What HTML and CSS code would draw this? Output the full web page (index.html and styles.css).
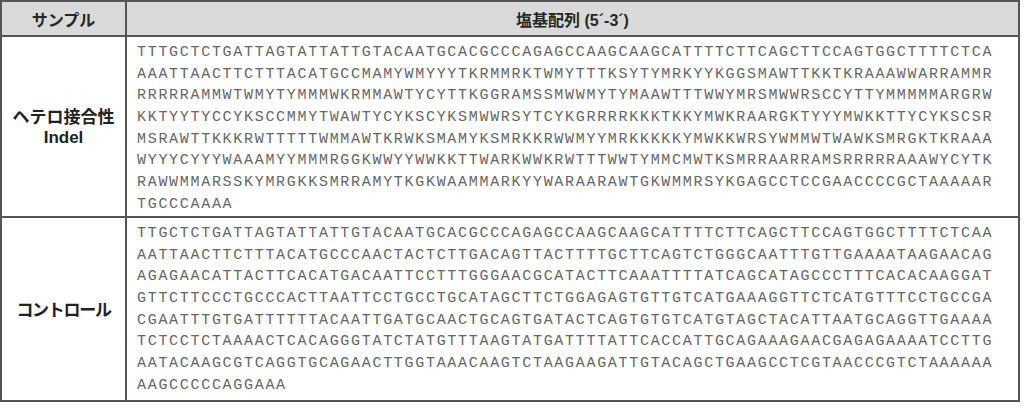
FILE: index.html
```html
<!DOCTYPE html>
<html lang="ja">
<head>
<meta charset="utf-8">
<title>塩基配列</title>
<link rel="stylesheet" href="styles.css">
</head>
<body>
<div class="sheet">
  <div class="cell head label-col">サンプル</div>
  <div class="cell head seq-col">塩基配列 (5´-3´)</div>

  <div class="cell label label-col row-a"><span>ヘテロ接合性</span><span class="latin">Indel</span></div>
  <div class="cell seq seq-col row-a">
    <div>TTTGCTCTGATTAGTATTATTGTACAATGCACGCCCAGAGCCAAGCAAGCATTTTCTTCAGCTTCCAGTGGCTTTTCTCA</div>
    <div>AAATTAACTTCTTTACATGCCMAMYWMYYYTKRMMRKTWMYTTTKSYTYMRKYYKGGSMAWTTKKTKRAAAWWARRAMMR</div>
    <div>RRRRRAMMWTWMYTYMMMWKRMMAWTYCYTTKGGRAMSSMWWMYTYMAAWTTTWWYMRSMWWRSCCYTTYMMMMMARGRW</div>
    <div>KKTYYTYCCYKSCCMMYTWAWTYCYKSCYKSMWWRSYTCYKGRRRRKKKTKKYMWKRAARGKTYYYMWKKTTYCYKSCSR</div>
    <div>MSRAWTTKKKRWTTTTTWMMAWTKRWKSMAMYKSMRKKRWWMYYMRKKKKKYMWKKWRSYWMMWTWAWKSMRGKTKRAAA</div>
    <div>WYYYCYYYWAAAMYYMMMRGGKWWYYWWKKTTWARKWWKRWTTTWWTYMMCMWTKSMRRAARRAMSRRRRRAAAWYCYTK</div>
    <div>RAWWMMARSSKYMRGKKSMRRAMYTKGKWAAMMARKYYWARAARAWTGKWMMRSYKGAGCCTCCGAACCCCGCTAAAAAR</div>
    <div>TGCCCAAAA</div>
  </div>

  <div class="cell label label-col row-b"><span class="narrow">コントロール</span></div>
  <div class="cell seq seq-col row-b">
    <div>TTGCTCTGATTAGTATTATTGTACAATGCACGCCCAGAGCCAAGCAAGCATTTTCTTCAGCTTCCAGTGGCTTTTCTCAA</div>
    <div>AATTAACTTCTTTACATGCCCAACTACTCTTGACAGTTACTTTTGCTTCAGTCTGGGCAATTTGTTGAAAATAAGAACAG</div>
    <div>AGAGAACATTACTTCACATGACAATTCCTTTGGGAACGCATACTTCAAATTTTATCAGCATAGCCCTTTCACACAAGGAT</div>
    <div>GTTCTTCCCTGCCCACTTAATTCCTGCCTGCATAGCTTCTGGAGAGTGTTGTCATGAAAGGTTCTCATGTTTCCTGCCGA</div>
    <div>CGAATTTGTGATTTTTTACAATTGATGCAACTGCAGTGATACTCAGTGTGTCATGTAGCTACATTAATGCAGGTTGAAAA</div>
    <div>TCTCCTCTAAAACTCACAGGGTATCTATGTTTAAGTATGATTTTATTCACCATTGCAGAAAGAACGAGAGAAAATCCTTG</div>
    <div>AATACAAGCGTCAGGTGCAGAACTTGGTAAACAAGTCTAAGAAGATTGTACAGCTGAAGCCTCGTAACCCGTCTAAAAAA</div>
    <div>AAGCCCCCAGGAAA</div>
  </div>
</div>
</body>
</html>
```
FILE: styles.css
```css
html, body {
  margin: 0;
  padding: 0;
  background: #ffffff;
}

.sheet {
  display: grid;
  grid-template-columns: 125px 891px;
  grid-template-rows: 35px 181px 182px;
  width: fit-content;
  border: 2px solid #555555;
}

.label-col {
  border-right: 2px solid #555555;
}

.head {
  background: #d9d9d9;
  border-bottom: 2px solid #555555;
  display: flex;
  align-items: center;
  justify-content: center;
  font-family: "Liberation Sans", "Noto Sans CJK JP", sans-serif;
  font-weight: bold;
  font-size: 16px;
  color: #262626;
}

.row-a {
  border-bottom: 2px solid #555555;
}

.label {
  display: flex;
  flex-direction: column;
  align-items: center;
  justify-content: center;
  font-family: "Noto Sans CJK JP", "Liberation Sans", sans-serif;
  font-weight: bold;
  font-size: 17px;
  line-height: 22px;
  color: #222222;
}

.label .latin {
  font-family: "Liberation Sans", "Noto Sans CJK JP", sans-serif;
  font-size: 17px;
}

.label .narrow {
  letter-spacing: -1.3px;
}

.seq {
  padding: 5px 0 0 10px;
  font-family: "Liberation Mono", "DejaVu Sans Mono", monospace;
  font-size: 15px;
  letter-spacing: 1.7px;
  line-height: 21.66px;
  color: #666666;
  white-space: nowrap;
  overflow: hidden;
}

.seq-col.seq {
  width: 881px;
}
```
